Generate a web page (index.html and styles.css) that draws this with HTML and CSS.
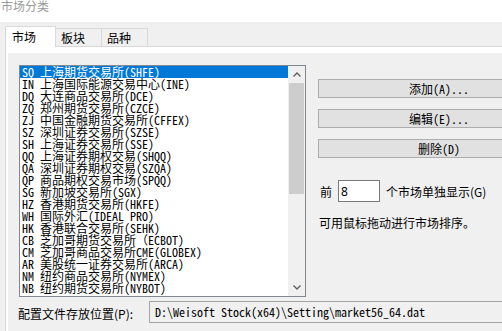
FILE: index.html
```html
<!DOCTYPE html>
<html lang="zh-CN">
<head>
  <meta charset="UTF-8">
  <meta name="viewport" content="width=device-width, initial-scale=1.0">
  <title>市场分类</title>
  <link rel="stylesheet" href="styles.css">
</head>
<body>
  <div class="dialog">
    <div class="titlebar">市场分类</div>

    <div class="tabs">
      <div class="tab active">市场</div>
      <div class="tab">板块</div>
      <div class="tab">品种</div>
    </div>

    <div class="tab-page">
      <div class="page-body">
        <div class="main">
          <div class="listbox">
            <ul class="items">
              <li class="selected">SQ 上海期货交易所(SHFE)</li>
              <li>IN 上海国际能源交易中心(INE)</li>
              <li>DQ 大连商品交易所(DCE)</li>
              <li>ZQ 郑州期货交易所(CZCE)</li>
              <li>ZJ 中国金融期货交易所(CFFEX)</li>
              <li>SZ 深圳证券交易所(SZSE)</li>
              <li>SH 上海证券交易所(SSE)</li>
              <li>QQ 上海证券期权交易(SHQQ)</li>
              <li>QA 深圳证券期权交易(SZQA)</li>
              <li>QP 商品期权交易市场(SPQQ)</li>
              <li>SG 新加坡交易所(SGX)</li>
              <li>HZ 香港期货交易所(HKFE)</li>
              <li>WH 国际外汇(IDEAL PRO)</li>
              <li>HK 香港联合交易所(SEHK)</li>
              <li>CB 芝加哥期货交易所（ECBOT)</li>
              <li>CM 芝加哥商品交易所CME(GLOBEX)</li>
              <li>AR 美股统一证券交易所(ARCA)</li>
              <li>NM 纽约商品交易所(NYMEX)</li>
              <li>NB 纽约期货交易所(NYBOT)</li>
            </ul>
            <div class="scrollbar">
              <div class="arrow">
                <svg width="8" height="5" viewBox="0 0 8 5"><path d="M0.5 4.5 L4 1 L7.5 4.5" fill="none" stroke="#606060" stroke-width="1.4"/></svg>
              </div>
              <div class="track"><div class="thumb"></div></div>
              <div class="arrow">
                <svg width="8" height="5" viewBox="0 0 8 5"><path d="M0.5 0.5 L4 4 L7.5 0.5" fill="none" stroke="#606060" stroke-width="1.4"/></svg>
              </div>
            </div>
          </div>

          <div class="side">
            <button>添加(A)...</button>
            <button>编辑(E)...</button>
            <button>删除(D)</button>
            <div class="count-row">
              <span class="count-pre">前</span>
              <input class="count-input" type="text" value="8">
              <span class="count-post">个市场单独显示(G)</span>
            </div>
            <p class="hint">可用鼠标拖动进行市场排序。</p>
          </div>
        </div>

        <div class="path-row">
          <label class="path-label">配置文件存放位置(P):</label>
          <div class="path-field">D:\Weisoft Stock(x64)\Setting\market56_64.dat</div>
        </div>
      </div>
    </div>
  </div>
</body>
</html>
```

FILE: styles.css
```css
* {
  box-sizing: border-box;
}
body {
  margin: 0;
  background: #f0f0f0;
  font-family: "Noto Sans CJK SC", sans-serif;
  font-size: 12px;
  color: #000;
  overflow: hidden;
}
.dialog {
  width: 502px;
  height: 331px;
  overflow: hidden;
}
.titlebar {
  height: 22px;
  background: #fff;
  color: #9a9a9a;
  line-height: 12px;
  padding-left: 1px;
}
.tabs {
  display: flex;
  align-items: flex-end;
  height: 24px;
  padding-left: 5px;
}
.tab {
  width: 47px;
  height: 18px;
  margin-left: -1px;
  padding-left: 5px;
  border: 1px solid #d9d9d9;
  border-bottom: none;
  background: #f0f0f0;
  line-height: 17px;
}
.tab.active {
  width: 51px;
  height: 21px;
  margin-left: 0;
  margin-bottom: -1px;
  padding-left: 6px;
  background: #fff;
  line-height: 20px;
  position: relative;
  z-index: 1;
}
.tab.active + .tab {
  margin-left: -1px;
}
.tab-page {
  margin-left: 5px;
  padding: 6px 0 0 2px;
  border-top: 1px solid #d9d9d9;
  border-left: 1px solid #d9d9d9;
  background: #fff;
}
.page-body {
  height: 300px;
  padding: 12px 0 0 11px;
  background: #f0f0f0;
}
.main {
  display: flex;
  align-items: flex-start;
}
.listbox {
  flex-shrink: 0;
  display: flex;
  width: 287px;
  height: 232px;
  border: 1px solid #828790;
  background: #fff;
}
.items {
  flex: 1;
  margin: 0;
  padding: 0;
  list-style: none;
  font-family: "Noto Sans Mono CJK SC", "Liberation Mono", monospace;
  font-size: 12px;
  line-height: 12px;
  overflow: hidden;
}
.items li {
  height: 12px;
  padding-left: 2px;
  white-space: nowrap;
}
.items li.selected {
  background: #0078d7;
  color: #fff;
}
.scrollbar {
  display: flex;
  flex-direction: column;
  width: 17px;
  background: #f0f0f0;
}
.arrow {
  display: flex;
  align-items: center;
  justify-content: center;
  height: 17px;
}
.track {
  flex: 1;
}
.thumb {
  height: 111px;
  margin: 0 1px;
  background: #cdcdcd;
}
.side {
  flex-shrink: 0;
  display: flex;
  flex-direction: column;
  width: 242px;
  margin-left: 12px;
  padding-top: 14px;
}
.side button {
  width: 242px;
  height: 19px;
  margin: 0 0 11px;
  padding: 0;
  border: 1px solid #adadad;
  background: #e1e1e1;
  font-family: "Noto Sans Mono CJK SC", "Liberation Mono", monospace;
  font-size: 12px;
  color: #000;
}
.count-row {
  display: flex;
  align-items: center;
  height: 22px;
  margin-top: 11px;
}
.count-pre {
  margin-left: 2px;
}
.count-input {
  width: 42px;
  height: 22px;
  margin-left: 6px;
  padding: 0 0 0 2px;
  border: 1px solid #7a7a7a;
  background: #fff;
  font-family: "Noto Sans", sans-serif;
  font-size: 12px;
}
.count-post {
  margin-left: 6px;
}
.hint {
  margin: 13px 0 0 1px;
  line-height: 16px;
}
.path-row {
  display: flex;
  align-items: flex-start;
  margin-top: 4px;
}
.path-label {
  flex-shrink: 0;
  width: 131px;
  margin: 5px 0 0 -1px;
  line-height: 16px;
  white-space: nowrap;
}
.path-field {
  flex-shrink: 0;
  width: 380px;
  height: 22px;
  padding-left: 5px;
  border: 1px solid #a5a5a5;
  background: #f0f0f0;
  font-family: "Noto Sans Mono CJK SC", "Liberation Mono", monospace;
  font-size: 12px;
  line-height: 20px;
}
```
